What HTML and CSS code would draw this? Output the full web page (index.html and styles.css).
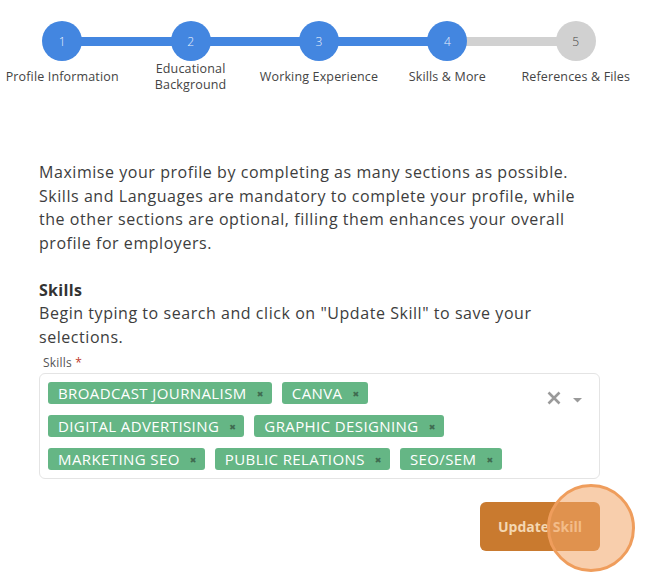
FILE: index.html
```html
<!DOCTYPE html>
<html>
<head>
<meta charset="utf-8">
<link rel="stylesheet" href="styles.css">
</head>
<body>
<div class="page">
  <div class="stepper">
    <div class="step done first"><div class="dot">1</div><div class="label">Profile Information</div></div>
    <div class="step done"><div class="dot">2</div><div class="label two">Educational<br>Background</div></div>
    <div class="step done"><div class="dot">3</div><div class="label">Working Experience</div></div>
    <div class="step done current"><div class="dot">4</div><div class="label">Skills &amp; More</div></div>
    <div class="step todo last"><div class="dot">5</div><div class="label">References &amp; Files</div></div>
  </div>

  <div class="content">
    <p class="intro">Maximise your profile by completing as many sections as possible. Skills and Languages are mandatory to complete your profile, while the other sections are optional, filling them enhances your overall profile for employers.</p>

    <h3 class="title">Skills</h3>
    <p class="hint">Begin typing to search and click on "Update Skill" to save your selections.</p>

    <label class="field-label">Skills <span class="req">*</span></label>
    <div class="select">
      <div class="tags">
        <span class="tag">BROADCAST JOURNALISM <span class="rm">&#x2716;</span></span>
        <span class="tag">CANVA <span class="rm">&#x2716;</span></span>
        <span class="tag">DIGITAL ADVERTISING <span class="rm">&#x2716;</span></span>
        <span class="tag">GRAPHIC DESIGNING <span class="rm">&#x2716;</span></span>
        <span class="tag">MARKETING SEO <span class="rm">&#x2716;</span></span>
        <span class="tag">PUBLIC RELATIONS <span class="rm">&#x2716;</span></span>
        <span class="tag">SEO/SEM <span class="rm">&#x2716;</span></span>
      </div>
      <div class="controls">
        <svg class="clear" width="14" height="14" viewBox="0 0 14 14"><path d="M1.5 1.5L12.5 12.5M12.5 1.5L1.5 12.5" stroke="#9a9a9a" stroke-width="2.6" fill="none"/></svg>
        <svg class="caret" width="9" height="5" viewBox="0 0 9 5"><path d="M0 0H9L4.5 4.5Z" fill="#9a9a9a"/></svg>
      </div>
    </div>

    <div class="actions">
      <button class="btn">Update Skill</button>
      <span class="touch"></span>
    </div>
  </div>
</div>
</body>
</html>
```
FILE: styles.css
```css
* { box-sizing: border-box; }
html, body { margin: 0; padding: 0; background: #fff; }
body { font-family: "Open Sans", "DejaVu Sans", sans-serif; color: #3d3d3d; width: 658px; height: 582px; overflow: hidden; }
.page { position: relative; }

.stepper { display: flex; margin-left: -2px; padding-top: 21px; width: 644px; }
.step { position: relative; width: 128.4px; display: flex; flex-direction: column; align-items: center; }
.step::before { content: ""; position: absolute; top: 16px; height: 9px; left: 0; right: 0; background: #d1d1d1; z-index: 0; }
.step.done::before { background: #4386e0; }
.step.current::before { background: linear-gradient(to right, #4386e0 50%, #d1d1d1 50%); }
.step.first::before { left: 50%; }
.step.last::before { right: 50%; }
.dot { position: relative; z-index: 1; width: 40px; height: 40px; border-radius: 50%; background: #4386e0; color: #e8f0fc; font-size: 12px; display: flex; align-items: center; justify-content: center; font-weight: 300; }
.todo .dot { background: #d1d1d1; color: #444; }
.label { margin-top: 8px; font-size: 12.5px; line-height: 16px; text-align: center; color: #444; white-space: nowrap; letter-spacing: 0.15px; }
.label.two { margin-top: 0; }

.content { padding: 0 58px 0 39px; }
.intro { margin: 68px 0 0; font-size: 16px; line-height: 23.7px; color: #3d3d3d; letter-spacing: 0.55px; }
.title { margin: 23px 0 0; font-size: 16px; line-height: 23px; font-weight: 700; color: #333; letter-spacing: 0.3px; }
.hint { margin: 0; font-size: 16px; line-height: 23.7px; letter-spacing: 0.55px; }
.field-label { display: block; margin: 6px 0 0 4px; font-size: 12px; line-height: 16px; color: #555; letter-spacing: 0.2px; }
.req { color: #c0392b; }

.select { margin-top: 2px; width: 561px; border: 1px solid #e4e4e4; border-radius: 6px; padding: 8px 0 8px 8px; display: flex; }
.tags { flex: 1; display: flex; flex-wrap: wrap; gap: 11px 10px; width: 480px; }
.tag { height: 22px; display: inline-flex; align-items: center; background: #65b685; color: #fff; border-radius: 3px; padding: 0 8px 0 10px; font-size: 15px; letter-spacing: 0.4px; }
.rm { margin-left: 10px; font-size: 8px; color: #3f6b50; }
.controls { width: 60px; display: flex; align-items: flex-start; padding-top: 9px; gap: 12px; padding-left: 8px; }
.caret { margin-top: 7px; }

.actions { display: flex; justify-content: flex-end; margin-top: 23px; position: relative; width: 561px; }
.btn { width: 120px; height: 49px; border: 0; border-radius: 6px; background: #c97a2f; color: #f4d7b2; font-family: inherit; font-size: 14px; font-weight: 700; }
.touch { position: absolute; right: -35px; top: -18px; width: 88px; height: 88px; border-radius: 50%; border: 3px solid #ef9d5c; background: rgba(242, 166, 104, 0.55); }
```
